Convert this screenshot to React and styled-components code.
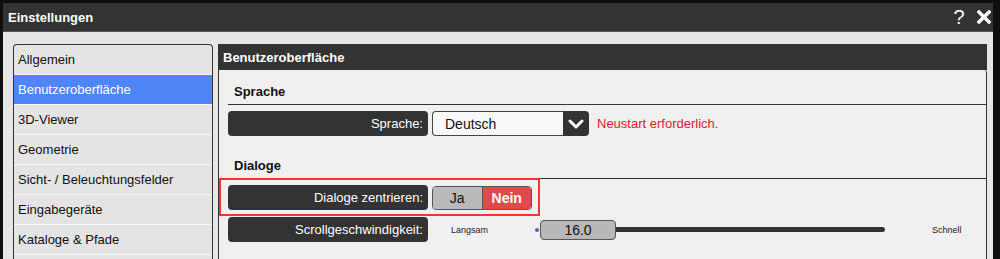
import React from 'react';
import styled, { createGlobalStyle } from 'styled-components';

const Global = createGlobalStyle`
  html, body {
    margin: 0;
    padding: 0;
    background: #0e0e0e;
    overflow: hidden;
  }
  body {
    font-family: "Liberation Sans", Arial, sans-serif;
  }
`;

const Frame = styled.div`
  width: 1000px;
  height: 259px;
  box-sizing: border-box;
  padding: 3px 7px 0 3px;
  background: #0e0e0e;
  display: flex;
  flex-direction: column;
  overflow: hidden;
`;

const TitleBar = styled.div`
  flex-shrink: 0;
  height: 28px;
  background: #333333;
  border-bottom: 1px solid #555;
  display: flex;
  align-items: center;
  padding: 0 1px 0 5px;
  color: #fff;
`;

const WindowTitle = styled.div`
  flex: 1;
  font-size: 13px;
  font-weight: bold;
`;

const TitleButton = styled.div`
  width: ${p => p.$size || '16px'};
  height: 22px;
  margin-right: ${p => p.$gap || '0'};
  display: flex;
  align-items: center;
  justify-content: center;
  color: #fff;
  font-size: 20px;
  line-height: 1;
`;

const Body = styled.div`
  flex: 1;
  min-height: 0;
  overflow: hidden;
  background: #e6e6e6;
  padding: 12px 6px 0 10px;
  display: flex;
  gap: 5px;
`;

const NavList = styled.ul`
  list-style: none;
  margin: 0;
  padding: 0;
  width: 200px;
  flex-shrink: 0;
  box-sizing: border-box;
  border: 1px solid #333;
  border-bottom: none;
  border-radius: 4px 4px 0 0;
  background: #e4e4e4;
  align-self: flex-start;
`;

const NavItem = styled.li`
  height: 29px;
  border-bottom: 1px solid #f6f6f6;
  display: flex;
  align-items: center;
  padding-left: 4px;
  font-size: 13px;
  color: ${p => (p.$active ? '#fff' : '#111')};
  background: ${p => (p.$active ? '#4f86f7' : 'transparent')};
`;

const Panel = styled.div`
  flex: 1;
  display: flex;
  flex-direction: column;
`;

const PanelHeader = styled.div`
  flex-shrink: 0;
  height: 26px;
  background: #333;
  color: #fff;
  font-size: 13px;
  font-weight: bold;
  display: flex;
  align-items: center;
  padding-left: 5px;
`;

const PanelContent = styled.div`
  flex: 1;
  background: #f0f0f0;
  border-left: 1px solid #333;
  border-right: 1px solid #333;
  border-top-right-radius: 3px;
  padding-left: 9px;
`;

const Section = styled.section`
  & + & {
    margin-top: 8px;
  }
`;

const SectionTitle = styled.h3`
  margin: 0;
  padding: 14px 0 4px 6px;
  line-height: 16px;
  font-size: 13px;
  font-weight: bold;
  color: #111;
  border-bottom: 1px solid #333;
`;

const Rows = styled.div`
  display: flex;
  flex-direction: column;
  gap: 7px;
  margin-top: 6px;
`;

const Row = styled.div`
  position: relative;
  display: flex;
  align-items: center;
  height: 25px;
  ${p =>
    p.$highlight &&
    `
    &::after {
      content: "";
      position: absolute;
      top: -7px;
      bottom: -6px;
      left: -9px;
      width: 321px;
      border: 2px solid #f23434;
      box-sizing: border-box;
      pointer-events: none;
    }
  `}
`;

const Label = styled.div`
  width: 200px;
  height: 25px;
  flex-shrink: 0;
  box-sizing: border-box;
  background: #333;
  border-radius: 4px;
  color: #fff;
  font-size: 13px;
  display: flex;
  align-items: center;
  justify-content: flex-end;
  padding-right: 5px;
  margin-right: 4px;
`;

const Select = styled.div`
  width: 157px;
  height: 25px;
  display: flex;
`;

const SelectValue = styled.div`
  flex: 1;
  background: #f9f9f9;
  border: 1px solid #444;
  border-right: none;
  border-radius: 4px 0 0 4px;
  font-size: 14px;
  color: #111;
  display: flex;
  align-items: center;
  padding-left: 12px;
`;

const SelectButton = styled.div`
  width: 26px;
  background: #333;
  border-radius: 0 4px 4px 0;
  display: flex;
  align-items: center;
  justify-content: center;
`;

const Notice = styled.span`
  margin-left: 8px;
  color: #d9222c;
  font-size: 13px;
`;

const Toggle = styled.div`
  width: 100px;
  height: 24px;
  box-sizing: border-box;
  border: 1px solid #555;
  border-radius: 4px;
  overflow: hidden;
  display: flex;
`;

const ToggleOption = styled.div`
  flex: 1;
  display: flex;
  align-items: center;
  justify-content: center;
  font-size: 14px;
  font-weight: ${p => (p.$on ? 'bold' : 'normal')};
  color: ${p => (p.$on ? '#fff' : '#111')};
  background: ${p => (p.$on ? '#e14a4a' : '#b9b9b9')};
  & + & {
    border-left: 1px solid #555;
  }
`;

const Hint = styled.span`
  font-size: 9px;
  color: #222;
  width: ${p => p.$width || 'auto'};
  margin-left: ${p => p.$gap || '0'};
`;

const Slider = styled.div`
  width: 350px;
  display: flex;
  align-items: center;
`;

const Dot = styled.div`
  width: 4px;
  height: 4px;
  border-radius: 50%;
  background: #4d5fd0;
  margin-right: 1px;
`;

const Handle = styled.div`
  width: 76px;
  height: 20px;
  box-sizing: border-box;
  background: #b8b8b8;
  border: 1px solid #555;
  border-radius: 4px;
  display: flex;
  align-items: center;
  justify-content: center;
  font-size: 14px;
  color: #111;
`;

const Track = styled.div`
  flex: 1;
  height: 5px;
  background: #333;
  border-radius: 0 3px 3px 0;
`;

const Chevron = () => (
  <svg width="16" height="12" viewBox="0 0 16 12">
    <path d="M2 3 L8 9 L14 3" fill="none" stroke="#fff" strokeWidth="3" strokeLinecap="round" strokeLinejoin="round" />
  </svg>
);

const CloseIcon = () => (
  <svg width="14" height="14" viewBox="0 0 14 14">
    <path d="M2 2 L12 12 M12 2 L2 12" stroke="#fff" strokeWidth="3.4" strokeLinecap="square" />
  </svg>
);

const navItems = [
  'Allgemein',
  'Benutzeroberfläche',
  '3D-Viewer',
  'Geometrie',
  'Sicht- / Beleuchtungsfelder',
  'Eingabegeräte',
  'Kataloge & Pfade',
  '',
];

export default function App() {
  return (
    <>
      <Global />
      <Frame>
        <TitleBar>
          <WindowTitle>Einstellungen</WindowTitle>
          <TitleButton $size="22px" $gap="6px">?</TitleButton>
          <TitleButton><CloseIcon /></TitleButton>
        </TitleBar>
        <Body>
          <NavList>
            {navItems.map((item, i) => (
              <NavItem key={i} $active={item === 'Benutzeroberfläche'}>{item}</NavItem>
            ))}
          </NavList>
          <Panel>
            <PanelHeader>Benutzeroberfläche</PanelHeader>
            <PanelContent>
              <Section>
                <SectionTitle>Sprache</SectionTitle>
                <Rows>
                  <Row>
                    <Label>Sprache:</Label>
                    <Select>
                      <SelectValue>Deutsch</SelectValue>
                      <SelectButton><Chevron /></SelectButton>
                    </Select>
                    <Notice>Neustart erforderlich.</Notice>
                  </Row>
                </Rows>
              </Section>
              <Section>
                <SectionTitle>Dialoge</SectionTitle>
                <Rows>
                  <Row $highlight>
                    <Label>Dialoge zentrieren:</Label>
                    <Toggle>
                      <ToggleOption>Ja</ToggleOption>
                      <ToggleOption $on>Nein</ToggleOption>
                    </Toggle>
                  </Row>
                  <Row>
                    <Label>Scrollgeschwindigkeit:</Label>
                    <Hint $gap="19px" $width="84px">Langsam</Hint>
                    <Slider>
                      <Dot />
                      <Handle>16.0</Handle>
                      <Track />
                    </Slider>
                    <Hint $gap="47px">Schnell</Hint>
                  </Row>
                </Rows>
              </Section>
            </PanelContent>
          </Panel>
        </Body>
      </Frame>
    </>
  );
}
